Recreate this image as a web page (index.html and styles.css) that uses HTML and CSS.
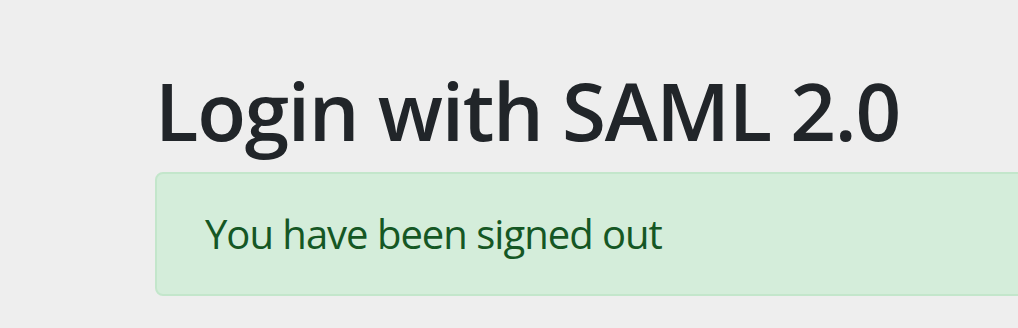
FILE: index.html
```html
<!DOCTYPE html>
<html lang="en">
<head>
<meta charset="utf-8">
<title>Login with SAML 2.0</title>
<link rel="stylesheet" href="styles.css">
</head>
<body>
<main class="page">
  <h1 class="title">Login with SAML 2.0</h1>
  <div class="alert alert-success">You have been signed out</div>
</main>
</body>
</html>
```
FILE: styles.css
```css
html, body {
  margin: 0;
  padding: 0;
  background: #eeeeee;
  overflow: hidden;
}
body {
  font-family: "Open Sans", "Noto Sans", "Liberation Sans", sans-serif;
  color: #212529;
}
.page {
  padding: 62px 0 0 155px;
  width: 1100px;
}
.title {
  margin: 0 0 14px 0;
  font-size: 80px;
  line-height: 96px;
  font-weight: 600;
  letter-spacing: -1.3px;
  color: #212529;
}
.alert {
  box-sizing: border-box;
  border: 2px solid #c3e6cb;
  border-radius: 8px;
  padding: 30px 48px;
  font-size: 40px;
  line-height: 60px;
  letter-spacing: -1px;
}
.alert-success {
  background: #d4edda;
  color: #155724;
}
```
